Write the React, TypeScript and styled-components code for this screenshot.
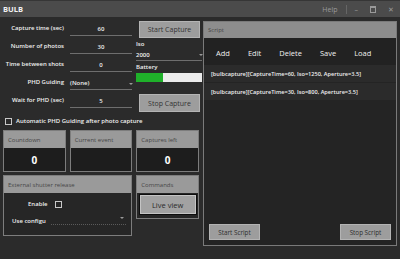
import React from "react";
import styled, { createGlobalStyle } from "styled-components";

const GlobalStyle = createGlobalStyle`
  html, body {
    margin: 0;
    padding: 0;
    background: #2b2b2b;
    font-family: "Open Sans", "Noto Sans", sans-serif;
  }
  #root {
    width: 400px;
    height: 259px;
    overflow: hidden;
  }
`;

const Window = styled.div`
  width: 400px;
  height: 259px;
  background: #2b2b2b;
  display: flex;
  flex-direction: column;
`;

const TitleBar = styled.div`
  height: 16px;
  border-top: 1px solid #363636;
  background: #4b4b4b;
  display: flex;
  align-items: center;
  padding: 0 6px 0 3px;
`;

const Title = styled.div`
  color: #f2f2f2;
  font-size: 7.5px;
  font-weight: 700;
  flex: 1;
`;

const WinControls = styled.div`
  display: flex;
  align-items: center;
  gap: 12px;
  color: #9a9a9a;
  font-size: 7px;
`;

const Sep = styled.div`
  width: 1px;
  height: 9px;
  background: #666;
  margin: 0 -4px;
`;

const MaxBox = styled.span`
  width: 4px;
  height: 4px;
  border: 1px solid #9a9a9a;
  border-top-width: 2px;
`;

const Body = styled.div`
  flex: 1;
  display: flex;
  gap: 4px;
  padding: 4px 3px 13px 3px;
`;

const LeftArea = styled.div`
  width: 196px;
  display: flex;
  flex-direction: column;
`;

const TopSection = styled.div`
  display: flex;
  gap: 4px;
`;

const Form = styled.div`
  width: 130px;
  display: grid;
  grid-template-columns: 61px 62px;
  column-gap: 6px;
  grid-auto-rows: 18px;
`;

const Label = styled.div`
  color: #f0f0f0;
  font-size: 6px;
  font-weight: 600;
  text-align: right;
  padding-top: 3px;
  white-space: nowrap;
`;

const Field = styled.div<{ $select?: boolean }>`
  position: relative;
  border-bottom: 1px solid #6e6e6e;
  height: 15px;
  color: #f0f0f0;
  font-size: 6px;
  font-weight: 600;
  display: flex;
  align-items: flex-end;
  justify-content: ${(p) => (p.$select ? "flex-start" : "center")};
  padding-bottom: 2px;
  box-sizing: border-box;
`;

const Arrow = styled.span`
  position: absolute;
  right: -1px;
  bottom: 4px;
  width: 0;
  height: 0;
  border-left: 2px solid transparent;
  border-right: 2px solid transparent;
  border-top: 2px solid #9a9a9a;
`;

const RightCol = styled.div`
  width: 66px;
  display: flex;
  flex-direction: column;
`;

const Button = styled.button<{ $w?: number }>`
  width: ${(p) => p.$w ?? 61}px;
  height: 17px;
  padding: 0;
  margin-left: 3px;
  background: #9d9d9d;
  border: 1px solid #b4b4b4;
  color: #333;
  font-family: "Open Sans", "Noto Sans", sans-serif;
  font-size: 7px;
  display: flex;
  align-items: center;
  justify-content: center;
`;

const SmallLabel = styled.div`
  color: #f0f0f0;
  font-size: 6px;
  font-weight: 600;
  line-height: 8px;
`;

const IsoField = styled(Field)`
  height: 13px;
  justify-content: flex-start;
  padding-bottom: 1px;
  margin-bottom: 2px;
`;

const BatteryBar = styled.div`
  height: 9px;
  width: 66px;
  margin-top: 2px;
  background: #ebebeb;
  display: flex;
`;

const BatteryFill = styled.div`
  background: #1fb12a;
  height: 100%;
`;

const CheckRow = styled.div`
  display: flex;
  align-items: center;
  gap: 4px;
  height: 10px;
  margin: 4px 0 2px 2px;
  color: #f0f0f0;
  font-size: 6px;
  font-weight: 600;
  white-space: nowrap;
`;

const Check = styled.span`
  width: 5px;
  height: 5px;
  border: 1px solid #c8c8c8;
  display: inline-block;
`;

const PanelRow = styled.div`
  display: flex;
  gap: 4px;
  align-items: flex-start;
  margin-top: 2px;
`;

const Panel = styled.div<{ $w: number; $h: number }>`
  width: ${(p) => p.$w}px;
  height: ${(p) => p.$h}px;
  box-sizing: border-box;
  border: 1px solid #7d7d7d;
  display: flex;
  flex-direction: column;
  background: #262626;
`;

const PanelHead = styled.div`
  height: 17px;
  flex: none;
  background: #9a9a9a;
  color: #474747;
  font-size: 6px;
  display: flex;
  align-items: center;
  padding-left: 4px;
`;

const ValueBody = styled.div`
  flex: 1;
  background: #1d1d1d;
  color: #fff;
  font-size: 10px;
  font-weight: 700;
  display: flex;
  align-items: center;
  justify-content: center;
`;

const ShutterBody = styled.div`
  flex: 1;
  display: flex;
  flex-direction: column;
  padding: 7px 5px 0 8px;
  gap: 7px;
`;

const EnableRow = styled.div`
  display: flex;
  align-items: center;
  gap: 7px;
  padding-left: 16px;
  color: #f0f0f0;
  font-size: 6px;
  font-weight: 600;
`;

const ConfigRow = styled.div`
  position: relative;
  display: flex;
  align-items: flex-end;
  color: #f0f0f0;
  font-size: 6px;
  font-weight: 600;
  height: 10px;
`;

const Dotted = styled.div`
  flex: 1;
  margin-left: 5px;
  border-bottom: 1px dotted #5a5a5a;
  align-self: flex-end;
`;

const CmdBody = styled.div`
  flex: 1;
  display: flex;
  align-items: flex-start;
  justify-content: center;
  padding-top: 2px;
`;

const LiveButton = styled.button`
  width: 56px;
  height: 19px;
  padding: 0;
  background: #a2a2a2;
  border: 1px solid #c4c4c4;
  outline: 1px solid #0e0e0e;
  color: #2a2a2a;
  font-family: "Open Sans", "Noto Sans", sans-serif;
  font-size: 7.5px;
`;

const ScriptPanel = styled.div`
  flex: 1;
  height: 225px;
  box-sizing: border-box;
  border: 1px solid #7a7a7a;
  display: flex;
  flex-direction: column;
  background: #242424;
`;

const ScriptHead = styled(PanelHead)`
  height: 16px;
  background: #8d8d8d;
`;

const Toolbar = styled.div`
  height: 27px;
  display: flex;
  align-items: center;
  padding: 2px 0 0 12px;
  box-sizing: border-box;
  gap: 18px;
  background: #222;
`;

const ToolButton = styled.span`
  color: #f0f0f0;
  font-size: 7.5px;
`;

const ScriptItem = styled.div`
  height: 17px;
  display: flex;
  align-items: center;
  padding-left: 7px;
  color: #f0f0f0;
  font-size: 5.6px;
  font-weight: 600;
  background: #2b2b2b;
  margin-bottom: 1px;
  white-space: nowrap;
`;

const ScriptSpacer = styled.div`
  flex: 1;
`;

const ScriptFooter = styled.div`
  display: flex;
  justify-content: space-between;
  padding: 0 5px 5px 5px;
`;

const ScriptButton = styled(Button)`
  width: 51px;
  height: 16px;
  margin: 0;
  font-size: 6.3px;
  color: #2e2e2e;
`;

export default function App() {
  const fields = [
    { label: "Capture time (sec)", value: "60" },
    { label: "Number of photos", value: "30" },
    { label: "Time between shots", value: "0" },
    { label: "PHD Guiding", value: "(None)", select: true },
    { label: "Wait for PHD (sec)", value: "5" },
  ];
  return (
    <Window>
      <GlobalStyle />
      <TitleBar>
        <Title>BULB</Title>
        <WinControls>
          <span>Help</span>
          <Sep />
          <span>–</span>
          <MaxBox />
          <span>✕</span>
        </WinControls>
      </TitleBar>
      <Body>
        <LeftArea>
          <TopSection>
            <Form>
              {fields.map((f) => (
                <React.Fragment key={f.label}>
                  <Label>{f.label}</Label>
                  <Field $select={f.select}>
                    {f.value}
                    {f.select && <Arrow />}
                  </Field>
                </React.Fragment>
              ))}
            </Form>
            <RightCol>
              <Button>Start Capture</Button>
              <SmallLabel style={{ marginTop: 2 }}>Iso</SmallLabel>
              <IsoField $select>
                2000
                <Arrow />
              </IsoField>
              <SmallLabel>Battery</SmallLabel>
              <BatteryBar>
                <BatteryFill style={{ width: "41%" }} />
              </BatteryBar>
              <Button style={{ marginTop: 12, height: 18 }}>Stop Capture</Button>
            </RightCol>
          </TopSection>
          <CheckRow>
            <Check />
            Automatic PHD Guiding after photo capture
          </CheckRow>
          <PanelRow>
            <Panel $w={63} $h={42}>
              <PanelHead>Countdown</PanelHead>
              <ValueBody>0</ValueBody>
            </Panel>
            <Panel $w={63} $h={42}>
              <PanelHead>Current event</PanelHead>
              <ValueBody />
            </Panel>
            <Panel $w={63} $h={42}>
              <PanelHead>Captures left</PanelHead>
              <ValueBody>0</ValueBody>
            </Panel>
          </PanelRow>
          <PanelRow style={{ marginTop: 3 }}>
            <Panel $w={130} $h={61}>
              <PanelHead>External shutter release</PanelHead>
              <ShutterBody>
                <EnableRow>
                  Enable
                  <Check />
                </EnableRow>
                <ConfigRow>
                  Use configu
                  <Dotted />
                  <Arrow style={{ right: 2, bottom: 6 }} />
                </ConfigRow>
              </ShutterBody>
            </Panel>
            <Panel $w={63} $h={44}>
              <PanelHead>Commands</PanelHead>
              <CmdBody>
                <LiveButton>Live view</LiveButton>
              </CmdBody>
            </Panel>
          </PanelRow>
        </LeftArea>
        <ScriptPanel>
          <ScriptHead>Script</ScriptHead>
          <Toolbar>
            <ToolButton>Add</ToolButton>
            <ToolButton>Edit</ToolButton>
            <ToolButton>Delete</ToolButton>
            <ToolButton>Save</ToolButton>
            <ToolButton>Load</ToolButton>
          </Toolbar>
          <ScriptItem>[bulbcapture][CaptureTime=60, Iso=1250, Aperture=3.5]</ScriptItem>
          <ScriptItem>[bulbcapture][CaptureTime=30, Iso=800, Aperture=3.5]</ScriptItem>
          <ScriptSpacer />
          <ScriptFooter>
            <ScriptButton>Start Script</ScriptButton>
            <ScriptButton>Stop Script</ScriptButton>
          </ScriptFooter>
        </ScriptPanel>
      </Body>
    </Window>
  );
}
